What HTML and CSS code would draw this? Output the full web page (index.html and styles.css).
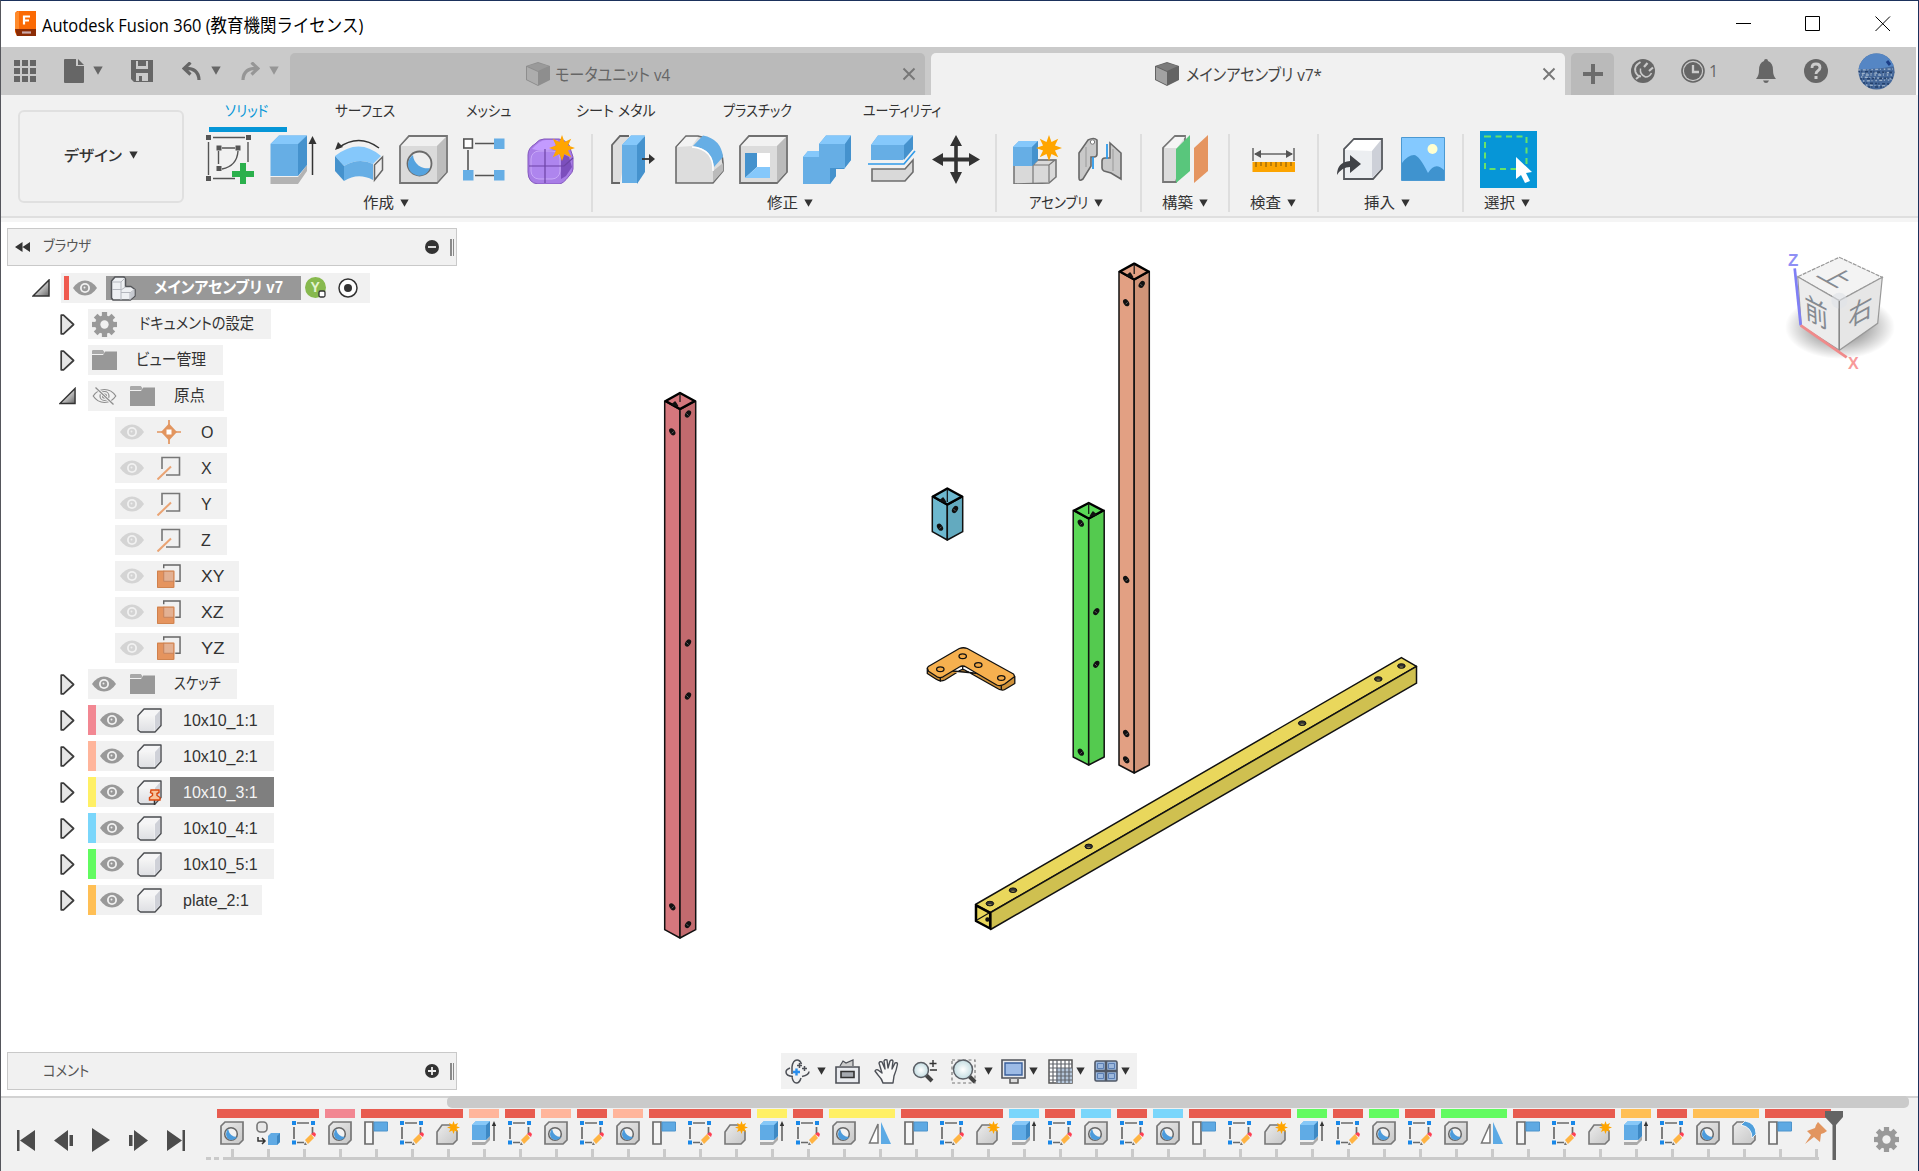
FILE: index.html
```html
<!DOCTYPE html>
<html lang="ja">
<head>
<meta charset="utf-8">
<title>Autodesk Fusion 360 (教育機関ライセンス)</title>
<link rel="stylesheet" href="styles.css">
</head>
<body>
<svg class="defs" width="0" height="0">
  <defs>
    <linearGradient id="gGray" x1="0" y1="0" x2="1" y2="1"><stop offset="0" stop-color="#ececec"/><stop offset="1" stop-color="#c6c6c6"/></linearGradient>
    <linearGradient id="gTri" x1="0" y1="0" x2="1" y2="1"><stop offset=".3" stop-color="#eee"/><stop offset="1" stop-color="#666"/></linearGradient>
    <linearGradient id="gFace" x1="0" y1="0" x2="0" y2="1"><stop offset="0" stop-color="#f4f4f4"/><stop offset="1" stop-color="#dfe0e4"/></linearGradient>
    <radialGradient id="gShadow"><stop offset="0.45" stop-color="#000" stop-opacity=".34"/><stop offset="1" stop-color="#000" stop-opacity="0"/></radialGradient>
    <radialGradient id="gLens"><stop offset="0" stop-color="#fff"/><stop offset="1" stop-color="#c4dde2"/></radialGradient>
  </defs>
  <symbol id="down" viewBox="0 0 10 9"><path d="M.3.5h9.4L5 8.700z" fill="currentColor"/></symbol>
  <symbol id="star" viewBox="-12 -12 24 24"><path d="M0-12 2.300-5.500 8.500-8.500 5.500-2.300 12 0 5.500 2.300 8.500 8.500 2.300 5.500 0 12-2.300 5.500-8.500 8.500-5.500 2.300-12 0-5.500-2.300-8.500-8.500-2.300-5.500z" fill="#ffa500"/></symbol>
  <symbol id="x" viewBox="0 0 14 14"><path d="M1.500 1.500l11 11M12.500 1.500l-11 11" stroke="#777" stroke-width="1.900" fill="none"/></symbol>
  <symbol id="tabcube" viewBox="0 0 24 24"><path d="M12 0 24 4v14l-12 6L0 18V4z" fill="#636363"/><path d="M1 5l11 5v13L1 17.500z" fill="#a2a2a2"/><path d="M1 4 12 1l11 3-11 5z" fill="#7b7b7b"/></symbol>
  <symbol id="gear" viewBox="-12 -12 24 24"><g fill="#999"><rect x="-2.500" y="-12" width="5" height="24"/><rect x="-2.500" y="-12" width="5" height="24" transform="rotate(45)"/><rect x="-2.500" y="-12" width="5" height="24" transform="rotate(90)"/><rect x="-2.500" y="-12" width="5" height="24" transform="rotate(135)"/><circle r="9"/></g><circle r="4" fill="#f1f1f1"/></symbol>
  <symbol id="folder" viewBox="0 0 25 20"><path d="M0 1.200Q0 0 1.200 0h9.600l1.700 2.300-1 1.700H0z" fill="#a9a9a9"/><path d="M0 5h11l2.300-3.500H25V20H0z" fill="#989898"/></symbol>
  <symbol id="eye" viewBox="0 0 24 16"><path d="M0 8Q5 .5 12 .5T24 8q-5 7.500-12 7.500T0 8z" fill="currentColor"/><circle cx="12" cy="8" r="5" fill="#f1f1f1"/><circle cx="12" cy="8" r="3.200" fill="currentColor"/><circle cx="11.500" cy="7.500" r="1" fill="#eee"/></symbol>
  <symbol id="eyeoff" viewBox="0 0 24 18"><g fill="none" stroke="#8d8d8d" stroke-width="1.200"><path d="M.7 9Q5 2.500 12 2.500T23.300 9Q19 15.500 12 15.500T.7 9z"/><circle cx="12" cy="9" r="4.500"/><circle cx="12" cy="9" r="2"/><path d="M3 .5l18 17" stroke="#f1f1f1" stroke-width="3"/><path d="M3 .5l18 17"/></g></symbol>
  <symbol id="shut" viewBox="0 0 15 21"><path d="M1.200 1.200h2.300L13.600 10.500 3.500 19.800H1.200z" fill="#e6e6e6" stroke="#3c3c3c" stroke-width="1.700" stroke-linejoin="round"/></symbol>
  <symbol id="open" viewBox="0 0 18 18"><path d="M17 1v16H1z" fill="url(#gTri)" stroke="#333" stroke-width="1.500"/></symbol>
  <symbol id="comp" viewBox="0 0 25 25"><path d="M1 7.500 7 1h17v16.500L18 24H3.500L1 22z" fill="#f5f5f6" stroke="#4a4c50" stroke-width="1.400" stroke-linejoin="round"/><path d="M2 8h15.500v15H4l-2-1.500z" fill="url(#gFace)"/><path d="M18 8l5-5.500v14.700L18 22.500z" fill="#cfd1d8"/></symbol>
  <symbol id="pinned" viewBox="0 0 25 25"><use href="#comp"/><path d="M17.500 20v5" stroke="#333" stroke-width="1.500"/><path d="M14 10h8v2.500l-2 1v2l3 2V20H12.500v-2.500l3-2v-2l-2-1z" fill="#f8c49c" stroke="#d9480f" stroke-width="1.400"/></symbol>
  <symbol id="asm" viewBox="0 0 26 25"><path d="M1.500 5 5 1h9l1.500 2v7.500H21l4 3V20l-4.500 4H3l-1.500-2z" fill="#eef0f3" stroke="#54565a" stroke-width="1.500" stroke-linejoin="round"/><path d="M2 13.500h9M11 24V6M11 6l4-4M11 14l4.500-3M20 24v-7l4.500-3.500M11 16.500h9M2 6h9" stroke="#b4b7be" stroke-width="1" fill="none"/><path d="M20.500 17l4-3v5.800l-4 3.500z" fill="#c6c9d0"/></symbol>
  <symbol id="point" viewBox="0 0 24 24"><path d="M12 0v24M0 12h24" stroke="#e2955f" stroke-width="1.700"/><path d="M12 3.500l8 8.500-8 8.500L4 12z" fill="#e2955f"/><rect x="9.500" y="9.500" width="5" height="5" fill="#fff"/></symbol>
  <symbol id="axis" viewBox="0 0 24 24"><path d="M5 13V1.500h17.500V19H9" fill="none" stroke="#777" stroke-width="1.600"/><path d="M.5 23.500 14 10.500" stroke="#eaa474" stroke-width="2"/></symbol>
  <symbol id="plane" viewBox="0 0 25 25"><rect x="0" y="7" width="18" height="17.500" fill="#e5945e"/><path d="M7 7h11v11H7z" fill="#e3b193"/><path d="M7 7v11h11" stroke="#c4835d" fill="none"/><path d="M.5 7.500h17v17H.5z" stroke="#cf7f4b" fill="none"/><path d="M7 4.500V1h17v17h-5" fill="none" stroke="#666" stroke-width="1.500"/></symbol>

  <symbol id="sketch" viewBox="0 0 49 49"><g fill="none" stroke="#555" stroke-width="1.400"><path d="M7 2.500h32M2.500 7v33M42 7v20M7 43.500h22M16 13h13M12.500 16v13M32 16q-1 15-16 18"/></g><g fill="#555"><path d="M0 0h5v5H0zM40 0h5v5h-5zM0 41h5v5H0zM10.500 10.500h5v5h-5zM29.500 10.500h5v5h-5zM10.500 31h5v5h-5z"/></g><path d="M34 28h6v8h8v6h-8v7h-6v-7h-8v-6h8z" fill="#2bb04c"/></symbol>
  <symbol id="extrude" viewBox="0 0 49 49"><path d="M.5 42H28l9-12v6l-9 13H.5z" fill="#b3b3b3"/><path d="M.5 9 9 .5h28L28 9v32H.5z" fill="#66aee5"/><path d="M.5 9 9 .5h28L28 9z" fill="#85c8fb"/><path d="M28 9 37 .5V30L28 41z" fill="#4592cd"/><path d="M42.500 6v34" stroke="#333" stroke-width="1.500"/><path d="M42.500 1l4 8h-8z" fill="#333"/></symbol>
  <symbol id="revolve" viewBox="0 0 49 49"><path d="M0 19Q24 0 46 19l-8 8Q24 20 9 29z" fill="#85c8fb"/><path d="M0 19l9 10v15L0 34z" fill="#4592cd"/><path d="M9 29Q24 20 38 27v16q-15-8-29 1z" fill="#66aee5"/><path d="M39.500 28l8-8v13l-8 10z" fill="#eee" stroke="#666" stroke-width="1.500"/><path d="M3 11Q24-4 44 11" fill="none" stroke="#333" stroke-width="1.500"/><path d="M0 13l3-8 5 5z" fill="#333"/></symbol>
  <symbol id="hole" viewBox="0 0 49 49"><path d="M1 11 10 1h38v36L38 48H1z" fill="#dadada" stroke="#757575" stroke-width="1.800"/><path d="M2 11 10.500 2H47l-9 9z" fill="#f0f0f0"/><path d="M38 11l9-9v35l-9 10z" fill="#bdbdbd"/><circle cx="20.500" cy="28.500" r="12" fill="#eee" stroke="#6a6a6a" stroke-width="1.800"/><path d="M14 20a14 14 0 0 0 17 13 11.300 11.300 0 1 1-17-13z" fill="#55a3df"/></symbol>
  <symbol id="pattern" viewBox="0 0 49 49"><g stroke="#555" stroke-width="1.600" fill="none"><path d="M12 8.500h19M5 15v20M12 40.500h19"/><rect x=".8" y="4" width="8.600" height="9" fill="#fff"/></g><path d="M31 3.500h10.500V14H31zM0 35h10.500v10.500H0zM31 35h10.500v10.500H31z" fill="#66aee5"/></symbol>
  <symbol id="form" viewBox="0 0 49 49"><path d="M1 20Q1 13 8 9q4-5 9-5h15q5 0 10 6l4 12v12q0 3-4 7-6 8-10 8H11Q1 48 1 37z" fill="#a87de6" stroke="#8357bd"/><path d="M5 14q8-9 14-9h12l-5 9q-10 3-21 0z" fill="#c39bff"/><path d="M34 18l8 4 3 10-6 9-5 3z" fill="#7c4fbd"/><rect x="4" y="16" width="29" height="28" rx="8" fill="#ae85ee" stroke="#c8a8f8"/><path d="M2 31h35M18 14v34M37 31l9-8" stroke="#6c43a5" stroke-width="1.200" fill="none"/><use href="#star" x="22" y="0" width="26" height="26"/></symbol>
  <symbol id="press" viewBox="0 0 49 49"><path d="M9 48H1V10L9 1h9" fill="#ddd" stroke="#666" stroke-width="1.800"/><path d="M11 10 20 .5h14L27 10v38H11z" fill="#66aee5"/><path d="M11 10 20 .5h14L27 10z" fill="#85c8fb"/><path d="M26 10l8-9v36l-8 12z" fill="#4592cd"/><path d="M31 24h10" stroke="#333" stroke-width="1.800"/><path d="M38 19l6 5-6 5z" fill="#333"/></symbol>
  <symbol id="fillet" viewBox="0 0 49 49"><path d="M1 12 11 1h12Q47 6 48 28v8L38 48H1z" fill="#ddd" stroke="#6b6b6b" stroke-width="1.600"/><path d="M2 12 11 2h12l-6 9z" fill="#f3f3f3"/><path d="M18 11 28 .5Q46 4 48 22l-9 10Q37 14 18 11z" fill="#66aee5"/><path d="M38 36l10-8v8L38 47z" fill="#bbb"/><path d="M17 12q22 2 21 24" stroke="#fff" stroke-width="1.500" fill="none"/></symbol>
  <symbol id="shell" viewBox="0 0 49 49"><path d="M1 11 10 1h38v36L38 48H1z" fill="#dcdcdc" stroke="#707070" stroke-width="1.800"/><path d="M2 11 10.500 2H47l-9 9z" fill="#f2f2f2"/><path d="M38 11l9-9v35l-9 10z" fill="#bbb"/><path d="M6 18h25v25H6z" fill="#fff"/><path d="M6 18h12v14L6 43z" fill="#4592cd"/><path d="M6 43l12-11h13v11z" fill="#85c8fb"/></symbol>
  <symbol id="combine" viewBox="0 0 49 49"><path d="M0 22l5-6h11V9l7-8.500h25V25l-7 9h-8v7l-6 8H0z" fill="#66aee5"/><path d="M16 9l7-8.500h25L42 9zM0 22l5-6h11v6z" fill="#85c8fb"/><path d="M42 9l6-8.500V25l-7 9h-8v7l-6 8V33h15z" fill="#4592cd"/></symbol>
  <symbol id="split" viewBox="0 0 49 49"><path d="M3 10 10 .5h35V14L35 25H3z" fill="#66aee5"/><path d="M3 10 10 .5h35L37 10z" fill="#85c8fb"/><path d="M36 10l9-9v13L36 25z" fill="#4592cd"/><path d="M0 29h36L47 16" fill="none" stroke="#319be9" stroke-width="1.700"/><path d="M4 34h33l8-9v12l-8 9H4z" fill="#d9d9d9" stroke="#6d6d6d" stroke-width="1.600"/></symbol>
  <symbol id="move" viewBox="0 0 49 49"><path d="M24 0l6 11h-4.200v11.500H37V18l11 6.500L37 31v-4.500H25.800V37H30l-6 12-6-12h4.200V26.500H11V31L0 24.500 11 18v4.500h11.200V11H18z" fill="#333"/></symbol>
  <symbol id="newcomp" viewBox="0 0 49 49"><path d="M1 49V30h18l5-5h19v17l-7 6z" fill="#d9d9d9" stroke="#777" stroke-width="1.600"/><path d="M20 30v18M20 30l5-5h17l-6 5H20M36 30v17" stroke="#777" fill="none" stroke-width="1.200"/><path d="M0 12l6-6h19v19l-6 6H0z" fill="#66aee5"/><path d="M0 12l6-6h19l-6 6z" fill="#85c8fb"/><path d="M19 12l6-6v19l-6 6z" fill="#4592cd"/><use href="#star" x="23" y="0" width="26" height="26"/></symbol>
  <symbol id="joint" viewBox="0 0 49 49"><g fill="#c9c9c9" stroke="#686868" stroke-width="1.600"><path d="M2 18 11 5q6-3 9 0v14q0 3-3 3h-3v9L6 44q-4 3-4-1z"/><path d="M33 8l11 10v26L34 38l-7-2q-2-1-2-3v-7q0-3 3-3h5z"/></g><path d="M9 12v20M36 14v22" stroke="#a9a9a9" stroke-width="1.500"/><path d="M16 22v12M30 9v15" stroke="#2f9bea" stroke-width="1.800"/><circle cx="15.500" cy="7" r="2.200" fill="#fff" stroke="#777"/></symbol>
  <symbol id="construct" viewBox="0 0 49 49"><path d="M1 13 13 1h10v12l-9 34H1z" fill="#dcdcdc" stroke="#777" stroke-width="1.800"/><path d="M2 13 13 2h10l-8 11z" fill="#f5f5f5"/><path d="M14 14 28 0v36L14 48z" fill="#59c67c"/><path d="M32 13 46 0v36L32 48z" fill="#e59560"/></symbol>
  <symbol id="measure" viewBox="0 0 49 49"><path d="M4 13v13M45 13v13M6 19h37" stroke="#666" stroke-width="1.500"/><path d="M5 19l7-4v8zM44 19l-7-4v8z" fill="#555"/><path d="M3.500 27H46v10H3.500z" fill="#fca400"/><path d="M7 27v5M12 27v4M17 27v5M22 27v4M27 27v5M32 27v4M37 27v5M42 27v4" stroke="#78520d"/></symbol>
  <symbol id="insert" viewBox="0 0 49 49"><path d="M7 43V14L17 4h28v30L36 44H7z" fill="#eceef1" stroke="#55585d" stroke-width="1.800"/><path d="M8 15 17 5h27l-9 11z" fill="#fff"/><path d="M35 16l9-11v29l-9 9z" fill="#cdd0d8"/><path d="M0 40q0-13 13-14v-6l11 9-11 9v-6q-8 0-13 8z" fill="#404247"/></symbol>
  <symbol id="image" viewBox="0 0 49 49"><path d="M.5 2.500h43v43H.5z" fill="#84c9ff" stroke="#4b99d2"/><path d="M1 28Q7 20 13 20q5 0 14 18 7-12 16-3v10H1z" fill="#3f93cf"/><circle cx="31.500" cy="14" r="5" fill="#ffffd0"/></symbol>
  <symbol id="select" viewBox="0 0 57 57"><path d="M0 0h57v57H0z" fill="#0696d7"/><path d="M5 5.500h41.500V38H5z" fill="none" stroke="#68e269" stroke-width="2" stroke-dasharray="6 4.500"/><path d="M36 26v22l5-4 4 8 5-2-4-8 6-1z" fill="#fff"/></symbol>

  <symbol id="t-hole" viewBox="0 0 24 24"><path d="M1 5 5 1h18v18l-4 4H1z" fill="url(#gGray)" stroke="#777" stroke-width="1.700"/><circle cx="11" cy="13" r="6.300" fill="#f2f2f2" stroke="#666" stroke-width="1.500"/><path d="M8 8q2 8 9 8-2 3-6 3-5-1-5-6 0-3 2-5z" fill="#4b9bdc"/></symbol>
  <symbol id="t-copy" viewBox="0 0 24 24"><rect x="1" y="1" width="10" height="10" rx="3.500" fill="#e8e8e8" stroke="#777" stroke-width="1.600"/><path d="M2 16v4h7M6 17l3 3-3 3" fill="none" stroke="#333" stroke-width="1.500"/><path d="M12 15l3-3h9v9l-3 3h-9z" fill="#60aae4"/><path d="M21 15l3-3v9l-3 3z" fill="#3d87c2"/></symbol>
  <symbol id="t-sketch" viewBox="0 0 24 24"><path d="M5 2h12M2 6v12M20.500 6v7M5 21.500h7" stroke="#6a6a6a" stroke-width="1.700"/><path d="M0 0h4v4H0zM19 0h4v4h-4zM0 19.500h4v4H0z" fill="#1988e8"/><path d="M13 19l6-6 3 4-6 6z" fill="#ffb443"/><path d="M19 13l3-2 2 2-1 3z" fill="#ff4053"/><path d="M13 21l2 3h-3z" fill="#777"/></symbol>
  <symbol id="t-plane" viewBox="0 0 24 24"><path d="M1 1h8v22H1z" fill="#f6f6f6" stroke="#6b6b6b" stroke-width="1.700"/><path d="M10 1h13.500v9H10z" fill="#5ea9e3" stroke="#4d94cc"/></symbol>
  <symbol id="t-comp" viewBox="0 0 24 24"><path d="M1 11 6 4h8l7 6v9l-4 4H1z" fill="url(#gGray)" stroke="#777" stroke-width="1.600"/><use href="#star" x="11" y="0" width="13" height="13"/></symbol>
  <symbol id="t-ext" viewBox="0 0 24 24"><path d="M0 21h13l5-6v4l-5 5H0z" fill="#aaa"/><path d="M0 4 4 0h14v15l-4 4H0z" fill="#60abe5"/><path d="M14 4l4-4v15l-4 4z" fill="#3e89c4"/><path d="M0 4 4 0h14l-4 4z" fill="#87c8f8"/><path d="M22 4v16" stroke="#444" stroke-width="1.300"/><path d="M22 0l2.200 5h-4.400z" fill="#333"/></symbol>
  <symbol id="t-mirror" viewBox="0 0 24 24"><path d="M10 3v19H1.500z" fill="#fff" stroke="#777" stroke-width="1.500"/><path d="M13 1l10 22H13z" fill="#5caae5"/></symbol>
  <symbol id="t-fillet" viewBox="0 0 24 24"><path d="M1 5 5 1h7Q23 4 23 14v5l-4 4H1z" fill="url(#gGray)" stroke="#777" stroke-width="1.600"/><path d="M9 4 13 0Q24 2 24 13l-4 4Q20 6 9 4z" fill="#4f9fdc" stroke="#fff" stroke-width=".8"/></symbol>
  <symbol id="t-pin" viewBox="0 0 24 24"><path d="M14 1l9 9-3 2-3 1-1 8-6-5-9 7 6-9-4-4 8-3 1-3z" fill="#e2955f"/></symbol>
</svg>

<div class="window">
  <header class="titlebar">
    <svg class="logo" width="22" height="25" viewBox="0 0 22 25"><path d="M3 0h19v25H3L1 21V2z" fill="#fb6a04"/><path d="M1 18h21v7H3z" fill="#8c2c05"/><path d="M1 2l4-2v18H1z" fill="#ff8b2c"/><path d="M10 13.500V5.500h6M10 9.500h5" stroke="#fff" stroke-width="2.200" fill="none"/><path d="M8 21.500h9" stroke="#caa" stroke-width="2.200"/></svg>
    <span class="title" data-w="321">Autodesk Fusion 360 (教育機関ライセンス)</span>
    <div class="winctl">
      <svg width="16" height="16" viewBox="0 0 16 16"><path d="M0 7.500h15"/></svg>
      <svg width="16" height="16" viewBox="0 0 16 16"><path d="M.5.5h14v14H.5z"/></svg>
      <svg width="16" height="16" viewBox="0 0 16 16"><path d="M.5.5l14.500 14.500M15 .5.5 15"/></svg>
    </div>
  </header>

  <div class="tabbar">
    <div class="qat">
      <svg width="22" height="22" viewBox="0 0 22 22"><path d="M0 0h6v6H0zM8 0h6v6H8zM16 0h6v6h-6zM0 8h6v6H0zM8 8h6v6H8zM16 8h6v6h-6zM0 16h6v6H0zM8 16h6v6H8zM16 16h6v6h-6z"/></svg>
      <svg class="m28" width="20" height="24" viewBox="0 0 20 24"><path d="M0 1q0-1 1-1h11v7h8v16q0 1-1 1H1q-1 0-1-1z"/><path d="M14 0l6 6h-6z"/></svg>
      <svg class="m9" width="10" height="9"><use href="#down"/></svg>
      <svg class="m28" width="22" height="22" viewBox="0 0 22 22"><path fill-rule="evenodd" d="M0 0h22v22H3l-3-3zM5 1v8h12V1h-2v5H7V1zM5 13v8h3v-5h3v5h6v-8z"/></svg>
      <svg class="m29 back" width="20" height="18" viewBox="0 0 20 18"><path d="M8.500.5 2 6.500l6.500 6M2.500 6.500Q16.500 5.500 17 18"/></svg>
      <svg class="m9" width="10" height="9"><use href="#down"/></svg>
      <svg class="m19 dim back" width="20" height="18" viewBox="0 0 20 18"><path d="M11.500.5 18 6.500l-6.500 6M17.500 6.500Q3.500 5.500 3 18"/></svg>
      <svg class="m9 dim" width="10" height="9"><use href="#down"/></svg>
    </div>
    <div class="tab idle">
      <svg class="cube" width="24" height="24"><use href="#tabcube"/></svg><span data-w="115">モータユニット v4</span>
      <svg class="close" width="14" height="14"><use href="#x"/></svg>
    </div>
    <div class="tab active">
      <svg class="cube" width="24" height="24"><use href="#tabcube"/></svg><span data-w="136">メインアセンブリ v7*</span>
      <svg class="close" width="14" height="14"><use href="#x"/></svg>
    </div>
    <div class="tab plus"><svg width="20" height="20" viewBox="0 0 20 20"><path d="M10 0v20M0 10h20" stroke="#6c6c6c" stroke-width="4"/></svg></div>
    <div class="status">
      <svg width="24" height="24" viewBox="0 0 24 24"><circle cx="12" cy="12" r="12" fill="#666"/><path d="M9.500 3Q2.500 7 4.500 13q1.500 4 5.500 4.500M5 20l5-4" stroke="#cacaca" stroke-width="2" fill="none"/><path d="M9 11l5-4 6 6-3 4q-5 2-8-1z" fill="#666"/><path d="M13 8l3.500-4M18 12l4-3.500" stroke="#cacaca" stroke-width="2.200"/><path d="M9.500 9.500q-1 6 5 8.500 4 0 6-4" stroke="#cacaca" stroke-width="1.500" fill="none"/></svg>
      <svg class="s-clock" width="24" height="24" viewBox="0 0 24 24"><circle cx="12" cy="12" r="11" fill="none" stroke="#666" stroke-width="1.600"/><circle cx="12" cy="12" r="9" fill="#666"/><path d="M12 6v7h6" stroke="#ccc" stroke-width="2.300" fill="none"/></svg>
      <b class="count">1</b>
      <svg class="s-bell" width="20" height="24" viewBox="0 0 20 24"><path d="M10 0q2 0 2 2 5 2 5 9 0 6 3 9H0q3-3 3-9 0-7 5-9 0-2 2-2zM7 21.500h6q-1 2.500-3 2.500t-3-2.500z" fill="#666"/></svg>
      <svg class="s-help" width="24" height="24" viewBox="0 0 24 24"><circle cx="12" cy="12" r="12" fill="#666"/><path d="M8 9q0-4 4-4t4 3.500q0 2-2 3.200T12 15" stroke="#ccc" stroke-width="2.800" fill="none"/><path d="M10.500 17h3v3h-3z" fill="#ccc"/></svg>
      <svg class="s-user" width="37" height="37" viewBox="0 0 37 37"><clipPath id="av"><circle cx="18.500" cy="18.500" r="18"/></clipPath><g clip-path="url(#av)"><path d="M0 0h37v37H0z" fill="#45689a"/><path d="M0 0h37v13q-18 4-37 3z" fill="#5586c4"/><path d="M1 17l34-1M0 20.500l37-1M3 24l32 2M5 28l28-1M8 32l22 1M4 22l30 0" stroke="#9fb3ca" stroke-width="1.300" stroke-dasharray="1.500 2.300 3 1.700 1 2.900"/><path d="M0 18.500l37 1M2 26l33-1M5 30l28 1M10 34h20" stroke="#24406b" stroke-width="1.600" stroke-dasharray="2 1.300 1 2.700 3 2.100"/><path d="M29 8l3 4" stroke="#1c3e86" stroke-width="3"/></g></svg>
    </div>
  </div>

  <div class="ribbon">
    <div class="workspace"><b data-w="58">デザイン</b><svg width="9" height="8"><use href="#down"/></svg></div>
    <div class="tools">
      <nav class="rtabs">
        <span class="on"><i data-w="43">ソリッド</i></span><span><i data-w="60">サーフェス</i></span><span><i data-w="45">メッシュ</i></span><span><i data-w="80">シート メタル</i></span><span><i data-w="69">プラスチック</i></span><span><i data-w="78">ユーティリティ</i></span>
      </nav>
      <div class="groups">
        <section class="g1"><div class="icons"><svg><use href="#sketch"/></svg><svg><use href="#extrude"/></svg><svg class="rev"><use href="#revolve"/></svg><svg><use href="#hole"/></svg><svg><use href="#pattern"/></svg><svg><use href="#form"/></svg></div><div class="label"><span data-w="31">作成</span><svg width="9" height="8"><use href="#down"/></svg></div></section>
        <section class="g2"><div class="icons"><svg><use href="#press"/></svg><svg><use href="#fillet"/></svg><svg><use href="#shell"/></svg><svg><use href="#combine"/></svg><svg><use href="#split"/></svg><svg><use href="#move"/></svg></div><div class="label"><span data-w="31">修正</span><svg width="9" height="8"><use href="#down"/></svg></div></section>
        <section class="g3"><div class="icons"><svg><use href="#newcomp"/></svg><svg><use href="#joint"/></svg></div><div class="label"><span data-w="59">アセンブリ</span><svg width="9" height="8"><use href="#down"/></svg></div></section>
        <section class="g4"><div class="icons"><svg><use href="#construct"/></svg></div><div class="label"><span data-w="31">構築</span><svg width="9" height="8"><use href="#down"/></svg></div></section>
        <section class="g5"><div class="icons"><svg><use href="#measure"/></svg></div><div class="label"><span data-w="31">検査</span><svg width="9" height="8"><use href="#down"/></svg></div></section>
        <section class="g6"><div class="icons"><svg><use href="#insert"/></svg><svg><use href="#image"/></svg></div><div class="label"><span data-w="31">挿入</span><svg width="9" height="8"><use href="#down"/></svg></div></section>
        <section class="g7"><div class="icons"><svg class="big"><use href="#select"/></svg></div><div class="label"><span data-w="31">選択</span><svg width="9" height="8"><use href="#down"/></svg></div></section>
      </div>
    </div>
  </div>

  <main class="viewport">
    <svg class="scene" width="1918" height="874" viewBox="0 222 1918 874">
      <defs>
        <g id="hl"><ellipse rx="2.600" ry="3.900" transform="rotate(-35)" fill="#111"/><path d="M-.5 1.500 1.500-.5" stroke="#777" stroke-width=".8"/></g>
        <g id="hr"><ellipse rx="2.600" ry="3.900" transform="rotate(35)" fill="#111"/><path d="M.5 1.500-1.500-.5" stroke="#777" stroke-width=".8"/></g>
        <g id="ht"><ellipse rx="3.800" ry="2.300" fill="#333" stroke="#111"/><path d="M-1.500 1h3" stroke="#998f45" stroke-width="1"/></g>
      </defs>
      <g stroke="#111" stroke-width="1.500" stroke-linejoin="round">
        <g><path d="M664.700 401 680 409.500V938l-15.300-8.300z" fill="#d5777d"/><path d="M680 409.500l15.700-8.500v528.700L680 938z" fill="#c26a6e"/><path d="M680 393l14.700 8-14.700 8-14.300-8z" fill="#d5777d" stroke="#000" stroke-width="2.500"/><path d="M680 393v9" fill="none" stroke-width="1.200"/><path d="M672 404.500l3-2.500 2.500 4z" fill="#111"/></g>
        <g><path d="M932.300 496.500l15 8.500v35l-15-8.300z" fill="#6db8cf"/><path d="M947.300 505l15.400-8.500v35.200L947.300 540z" fill="#63aabf"/><path d="M947.300 488.500l14.700 8-14.700 8-14.300-8z" fill="#6db8cf" stroke="#000" stroke-width="2.500"/><path d="M947.300 489v13" fill="none" stroke-width="1.200"/><path d="M940 500.500l3-2.500 2.500 4z" fill="#111"/></g>
        <g><path d="M1119 271.400l15.200 8.500V773l-15.200-8z" fill="#e2a083"/><path d="M1134.200 279.900l15.100-8.500V765l-15.100 8z" fill="#d09478"/><path d="M1134.200 263.700l14.300 7.800-14.300 8-14.300-8z" fill="#e2a083" stroke="#000" stroke-width="2.500"/><path d="M1134.200 264v10" fill="none" stroke-width="1.200"/><path d="M1127 275.500l3-2.500 2.500 4z" fill="#111"/></g>
        <g><path d="M1073.200 510.300l15.500 8.500V765l-15.500-8z" fill="#5bd957"/><path d="M1088.700 518.800l15.500-8.500V757l-15.500 8z" fill="#54ca4f"/><path d="M1088.700 503l14.500 7.500-14.500 8-14.500-8z" fill="#5bd957" stroke="#000" stroke-width="2.500"/><path d="M1088.700 503v11" fill="none" stroke-width="1.200"/><path d="M1096 514.500l-3-2.500-2.500 4z" fill="#111"/></g>
        <g><path d="M975.400 904.500l426-246.900 15.100 8.800L990.600 912.500z" fill="#e9d75c"/><path d="M990.600 912.500l425.900-246.100v16.800L990.600 929.500z" fill="#cfc050"/><path d="M976 905.500l14.200 7.500v15.500L976 921z" fill="#e9d75c" stroke="#000" stroke-width="2.500"/><path d="M977 920l12-7" fill="none" stroke-width="1.200"/><circle cx="987.500" cy="919.500" r="1.500" fill="#111"/></g>
        <g stroke-width="1.300"><path d="M927.300 668.500v5l8.500 5.500q4.500 3 9 1l16-10q2-1 4 0l31 17.500q6 4 9 2l10-6v-6.500z" fill="#cf9139"/><path d="M927.300 668l1-1.500 31-18q4-1.500 8 0L1013.500 674l1.200 2.600-10 7.400q-4 2.500-8 1L966 667q-3.300-2-6.600 0l-16.400 9.800q-3 1.500-6 0l-8.500-5.500z" fill="#f6b04f"/><path d="M940.300 677.800v4M1001.300 686v4M962.700 666v4" fill="none"/><g fill="#f1a744"><ellipse cx="940.300" cy="669.300" rx="3.700" ry="2.400"/><ellipse cx="962.700" cy="656.300" rx="3.700" ry="2.400"/><ellipse cx="978.300" cy="665" rx="3.700" ry="2.400"/><ellipse cx="1001.300" cy="678" rx="3.700" ry="2.400"/></g></g>
      </g>
      <use href="#hr" x="688" y="414"/><use href="#hl" x="672.300" y="431.800"/><use href="#hr" x="688" y="643"/><use href="#hr" x="688" y="696"/><use href="#hl" x="672.300" y="906.800"/><use href="#hr" x="688" y="924.600"/>
      <use href="#hr" x="955" y="509.500"/><use href="#hl" x="940" y="527.200"/>
      <use href="#hr" x="1141.700" y="284.400"/><use href="#hl" x="1126.200" y="302.700"/><use href="#hl" x="1126.200" y="579.500"/><use href="#hl" x="1126.200" y="733.500"/><use href="#hl" x="1126.200" y="759.800"/>
      <use href="#hl" x="1080.800" y="523.200"/><use href="#hr" x="1096.300" y="611.600"/><use href="#hr" x="1096.300" y="664.300"/><use href="#hl" x="1080.800" y="752.200"/>
      <use href="#ht" x="989.900" y="903.600"/><use href="#ht" x="1013" y="890.200"/><use href="#ht" x="1088.700" y="846.400"/><use href="#ht" x="1302.200" y="723.200"/><use href="#ht" x="1378.300" y="679"/><use href="#ht" x="1401.400" y="666"/>
      <g class="viewcube">
        <ellipse cx="1840" cy="327" rx="55" ry="32" fill="url(#gShadow)"/>
        <g stroke="#999" stroke-width="1.200"><path d="M1839.300 257.300l43 20-43 23.400-41.600-24z" fill="#f3f3f3" stroke-dasharray="4 1"/><path d="M1797.700 276.700l41.600 24v49.600l-38-24.600z" fill="#ececec"/><path d="M1882.300 277.300l-43 23.400v49.600l38.400-27z" fill="#e6e6e6"/></g>
        <circle cx="1839.300" cy="300.700" r="8" fill="#dfe3e8" opacity=".6"/>
        <path d="M1839.300 301v49" stroke="#888" stroke-width="1.300"/>
        <path d="M1794.700 268.300l6 57" stroke="#7f7ff5" stroke-width="2.700"/><path d="M1800.700 325.300l46 32" stroke="#f08a8a" stroke-width="2.700"/>
        <text transform="matrix(.9 .5 -.95 .5 1837 273)" font-size="26" x="-9" y="14">上</text>
        <text transform="matrix(.87 .46 .06 1.100 1807 320)" font-size="27" x="-2" y="-2">前</text>
        <text transform="matrix(.9 -.5 -.03 1 1848 328)" font-size="27">右</text>
        <text class="az" x="1788" y="265.500">Z</text><text class="ax" x="1848" y="369">X</text>
      </g>
    </svg>
    <div class="overlay">
      <div class="panelhead browserhead">
        <svg width="15" height="10" viewBox="0 0 15 10"><path d="M7.500 0v10L0 5zM15 0v10L7.500 5z" fill="#333"/></svg>
        <span data-w="48">ブラウザ</span>
        <svg class="knob" width="14" height="14" viewBox="0 0 14 14"><circle cx="7" cy="7" r="7" fill="#333"/><path d="M3 7h8" stroke="#eee" stroke-width="1.800"/></svg><i class="grip"></i>
      </div>
      <div class="tree">
        <div class="row root"><svg class="tg" width="18" height="18"><use href="#open"/></svg><div class="cell"><i class="bar"></i><svg class="eye" width="24" height="16"><use href="#eye"/></svg><div class="sel"><svg width="26" height="25"><use href="#asm"/></svg><b data-w="129">メインアセンブリ v7</b></div><svg class="badge" width="22" height="22" viewBox="0 0 22 22"><circle cx="10.500" cy="10.500" r="10.500" fill="#87b94e"/><text x="5.500" y="15" fill="#e4f4d0" font-size="14">Y</text><rect x="14" y="14" width="6" height="6" rx="1.500" fill="#fff" stroke="#333" stroke-width="1.300"/></svg><svg width="20" height="20" viewBox="0 0 20 20"><circle cx="10" cy="10" r="9" fill="#fff" stroke="#333" stroke-width="1.500"/><circle cx="10" cy="10" r="4" fill="#333"/></svg></div></div>
        <div class="row l1"><svg class="tg" width="15" height="21"><use href="#shut"/></svg><div class="cell w183"><svg width="25" height="25"><use href="#gear"/></svg><span class="n22" data-w="115">ドキュメントの設定</span></div></div>
        <div class="row l1"><svg class="tg" width="15" height="21"><use href="#shut"/></svg><div class="cell w135"><svg width="25" height="20"><use href="#folder"/></svg><span class="n19" data-w="70">ビュー管理</span></div></div>
        <div class="row l1"><svg class="tg" width="17" height="18"><use href="#open"/></svg><div class="cell w136"><svg width="25" height="18"><use href="#eyeoff"/></svg><svg class="f2" width="25" height="20"><use href="#folder"/></svg><span class="n19" data-w="31">原点</span></div></div>
        <div class="row l2"><div class="cell w112"><svg class="eye faint" width="24" height="16"><use href="#eye"/></svg><svg class="k" width="24" height="24"><use href="#point"/></svg><span>O</span></div></div>
        <div class="row l2"><div class="cell w112"><svg class="eye faint" width="24" height="16"><use href="#eye"/></svg><svg class="k" width="24" height="24"><use href="#axis"/></svg><span>X</span></div></div>
        <div class="row l2"><div class="cell w112"><svg class="eye faint" width="24" height="16"><use href="#eye"/></svg><svg class="k" width="24" height="24"><use href="#axis"/></svg><span>Y</span></div></div>
        <div class="row l2"><div class="cell w112"><svg class="eye faint" width="24" height="16"><use href="#eye"/></svg><svg class="k" width="24" height="24"><use href="#axis"/></svg><span>Z</span></div></div>
        <div class="row l2"><div class="cell w124"><svg class="eye faint" width="24" height="16"><use href="#eye"/></svg><svg class="k" width="24" height="24"><use href="#plane"/></svg><span data-w="23">XY</span></div></div>
        <div class="row l2"><div class="cell w124"><svg class="eye faint" width="24" height="16"><use href="#eye"/></svg><svg class="k" width="24" height="24"><use href="#plane"/></svg><span data-w="22">XZ</span></div></div>
        <div class="row l2"><div class="cell w124"><svg class="eye faint" width="24" height="16"><use href="#eye"/></svg><svg class="k" width="24" height="24"><use href="#plane"/></svg><span data-w="23">YZ</span></div></div>
        <div class="row l1"><svg class="tg" width="15" height="21"><use href="#shut"/></svg><div class="cell w149"><svg class="eye" width="24" height="16"><use href="#eye"/></svg><svg class="f2b" width="25" height="20"><use href="#folder"/></svg><span class="n19" data-w="47">スケッチ</span></div></div>
        <div class="row part c-pink"><svg class="tg" width="15" height="21"><use href="#shut"/></svg><div class="cell"><svg class="eye" width="24" height="16"><use href="#eye"/></svg><svg class="c" width="25" height="25"><use href="#comp"/></svg><span>10x10_1:1</span></div></div>
        <div class="row part c-peach"><svg class="tg" width="15" height="21"><use href="#shut"/></svg><div class="cell"><svg class="eye" width="24" height="16"><use href="#eye"/></svg><svg class="c" width="25" height="25"><use href="#comp"/></svg><span>10x10_2:1</span></div></div>
        <div class="row part c-yellow"><svg class="tg" width="15" height="21"><use href="#shut"/></svg><div class="cell"><svg class="eye" width="24" height="16"><use href="#eye"/></svg><svg class="c" width="25" height="25"><use href="#pinned"/></svg><span class="picked">10x10_3:1</span></div></div>
        <div class="row part c-blue"><svg class="tg" width="15" height="21"><use href="#shut"/></svg><div class="cell"><svg class="eye" width="24" height="16"><use href="#eye"/></svg><svg class="c" width="25" height="25"><use href="#comp"/></svg><span>10x10_4:1</span></div></div>
        <div class="row part c-green"><svg class="tg" width="15" height="21"><use href="#shut"/></svg><div class="cell"><svg class="eye" width="24" height="16"><use href="#eye"/></svg><svg class="c" width="25" height="25"><use href="#comp"/></svg><span>10x10_5:1</span></div></div>
        <div class="row part c-orange"><svg class="tg" width="15" height="21"><use href="#shut"/></svg><div class="cell short"><svg class="eye" width="24" height="16"><use href="#eye"/></svg><svg class="c" width="25" height="25"><use href="#comp"/></svg><span>plate_2:1</span></div></div>
      </div>
      <div class="bottom">
        <div class="panelhead comments"><span data-w="46">コメント</span><svg class="knob" width="14" height="14" viewBox="0 0 14 14"><circle cx="7" cy="7" r="7" fill="#333"/><path d="M3 7h8M7 3v8" stroke="#eee" stroke-width="1.800"/></svg><i class="grip"></i></div>
        <div class="navbar">
          <svg width="25" height="25" viewBox="0 0 25 25"><g fill="none" stroke="#4d5057" stroke-width="1.500"><path d="M7 8q1-7 5-7 3 0 4.500 4M7 18q1 6 4.500 6 3 0 4.500-5M5 9q-4 1.500-4 4 0 4 7 4.500M17 17.500q7-1.500 7-5M19.500 7v5M17 9.500h5M14.500 4v5M12 6.500h5M7 8v7"/></g><path d="M11.500 9.500v7M8 13h7" stroke="#2a8dec" stroke-width="2.400"/></svg>
          <svg class="dn" width="9" height="8"><use href="#down"/></svg>
          <svg class="n3" width="25" height="25" viewBox="0 0 25 25"><path d="M1 8h23v16H1z" fill="#e9ebef" stroke="#4d5057" stroke-width="1.600"/><path d="M5 7 8 2l3 2 7-3v6" fill="#ccc" stroke="#4d5057" stroke-width="1.200"/><path d="M6 12.500h13v6H6z" fill="#a6aab0" stroke="#333" stroke-width="1.600"/></svg>
          <svg class="n4" width="25" height="25" viewBox="0 0 25 25"><path d="M9 24q-1-4-5-8l-3-4q1-2 3-1l4 3L5 4q1-2 3-1l3 7-1-8q1-2 3-1l1 8 2-7q2-2 3 0l-1 8 3-6q2-1 2.500 1-1 6-3.500 12l-1 7z" fill="#f7f7f7" stroke="#4d5057" stroke-width="1.400" stroke-linejoin="round"/></svg>
          <svg class="n5" width="26" height="25" viewBox="0 0 26 25"><path d="M14 16l6 6" stroke="#444" stroke-width="4"/><circle cx="9" cy="11" r="7.500" fill="url(#gLens)" stroke="#5b5f66" stroke-width="1.500"/><path d="M21 1v7M17.500 4.500h7M18 11h7" stroke="#333" stroke-width="1.400"/></svg>
          <svg class="n6" width="26" height="25" viewBox="0 0 26 25"><path d="M1 1h23v23H1z" fill="none" stroke="#777" stroke-dasharray="3 2.500" stroke-width="1.200"/><path d="M18 17l6 6" stroke="#444" stroke-width="4"/><circle cx="12" cy="10.500" r="9.500" fill="url(#gLens)" stroke="#5b5f66" stroke-width="1.500"/></svg>
          <svg class="n7" width="9" height="8"><use href="#down"/></svg>
          <svg class="n8" width="25" height="25" viewBox="0 0 25 25"><path d="M9 20v4h8v-4" fill="#ddd" stroke="#555" stroke-width="1.500"/><path d="M1 1h23v18H1z" fill="#e6e8ec" stroke="#50535a" stroke-width="1.600"/><path d="M4 4h17v12H4z" fill="#9dbbe6" stroke="#385f9c" stroke-width="1.400"/></svg>
          <svg class="n9" width="9" height="8"><use href="#down"/></svg>
          <svg class="n10" width="25" height="25" viewBox="0 0 25 25"><path d="M1 1h23v23H1z" fill="#fff" stroke="#555" stroke-width="1.500"/><path d="M8 9h16v15H8z" fill="#b5c6da"/><path d="M5 1v23M9 1v23M13 1v23M17 1v23M21 1v23M1 5h23M1 9h23M1 13h23M1 17h23M1 21h23" stroke="#61656c" stroke-width="1.200"/></svg>
          <svg class="n9" width="9" height="8"><use href="#down"/></svg>
          <svg class="n10" width="24" height="24" viewBox="0 0 24 24"><rect x="1" y="2" width="22" height="20" rx="1.500" fill="#9db8dc" stroke="#505866" stroke-width="1.600"/><path d="M12 2v20M1 12h22" stroke="#505866" stroke-width="2.500"/><path d="M3.500 4.500h6v5h-6zM14.500 4.500h6v5h-6zM3.500 14.500h6v5h-6zM14.500 14.500h6v5h-6z" fill="none" stroke="#5b7fb5"/></svg>
          <svg class="n9" width="9" height="8"><use href="#down"/></svg>
        </div>
      </div>
    </div>
  </main>

  <footer class="timeline">
    <div class="player">
      <svg width="18" height="21" viewBox="0 0 18 21"><path d="M0 0h2.500v21H0zM18 0v21L3 10.500z"/></svg>
      <svg width="19" height="21" viewBox="0 0 19 21"><path d="M14 0v21L0 10.500zM15.500 5H19v11h-3.500z"/></svg>
      <svg width="18" height="24" viewBox="0 0 18 24"><path d="M0 0l18 12L0 24z"/></svg>
      <svg width="19" height="21" viewBox="0 0 19 21"><path d="M5 0v21l14-10.500zM0 5h3.500v11H0z"/></svg>
      <svg width="18" height="21" viewBox="0 0 18 21"><path d="M18 0h-2.500v21H18zM0 0v21l15-10.500z"/></svg>
    </div>
    <div class="track">
      <div class="scroll"><i></i></div>
      <div class="bars" id="bars"></div>
      <div class="items" id="items"></div>
      <svg class="marker" width="18" height="49" viewBox="0 0 18 49"><path d="M0 0h18v6l-7 8v35H7.500V14L0 6z" fill="#646464"/></svg>
    </div>
    <svg class="settings" width="25" height="25"><use href="#gear"/></svg>
  </footer>
</div>
<script src="app.js"></script>
</body>
</html>
```
FILE: styles.css
```css
* { box-sizing: border-box; }
body { margin: 0; background: #fff; color: #333; font: 15px/1 "Liberation Sans", "Noto Sans CJK JP", sans-serif; overflow: hidden; }
svg { display: block; flex: none; }
i { font-style: normal; }
.defs { position: absolute; }
[data-w] { display: inline-block; white-space: nowrap; transform-origin: 0 50%; flex: none; font-feature-settings: "palt"; }
.window { width: 1919px; height: 1171px; display: grid; grid-template-rows: 46px 48px 127px 1fr 75px; border: 1px solid #1b315c; border-bottom: 0; border-left-color: #55565c; }

.titlebar { display: flex; align-items: center; padding-left: 13px; background: #fff; }
.title { margin: 1px 0 0 6px; color: #000; font: 18px/24px "Open Sans", "Noto Sans CJK JP", sans-serif; }
.logo { margin-top: -2px; }
.winctl { display: flex; gap: 54px; margin: 0 27px 0 auto; }
.winctl svg { fill: none; stroke: #000; stroke-width: 1; }
.winctl svg:nth-child(2) { margin-left: -1px; }

.tabbar { display: flex; align-items: flex-end; background: #cacaca; margin-right: 2px; }
.qat { display: flex; align-items: center; width: 289px; height: 48px; padding-left: 13px; fill: #666; color: #666; }
.m9 { margin-left: 9px; } .m19 { margin-left: 19px; } .m28 { margin-left: 28px; } .m29 { margin-left: 29px; }
.m9 { margin-top: -2px; }
.dim { fill: #969696; color: #969696; }
.back { fill: none; stroke: currentColor; stroke-width: 3.2px; }
.tab { display: flex; align-items: center; height: 42px; border-radius: 5px 5px 0 0; font: 17px/24px "Open Sans", "Noto Sans CJK JP", sans-serif; }
.idle { width: 635px; background: #bababa; padding-left: 236px; color: #666; }
.idle .cube { opacity: .5; }
.active { width: 634px; margin-left: 6px; background: #f1f1f1; padding-left: 224px; color: #444; }
.tab span { margin: 2px 0 0 5px; }
.active span { margin-left: 7px; }
.tab .close { margin: 0 9px 0 auto; }
.plus { width: 43px; margin-left: 6px; background: #bababa; justify-content: center; }
.status { display: flex; align-items: center; height: 48px; margin-left: 17px; }
.s-clock { margin-left: 26px; }
.count { margin-left: 4px; width: 10px; font: 16px "Open Sans", sans-serif; color: #666; }
.s-bell { margin-left: 37px; } .s-help { margin-left: 28px; } .s-user { margin-left: 30px; }

.ribbon { display: flex; background: #f1f1f1; border-bottom: 4px solid #f5f5f5; box-shadow: inset 0 -2px #dfdfdf; }
.workspace { display: flex; align-items: center; justify-content: center; gap: 8px; width: 166px; height: 93px; margin: 15px 0 0 17px; padding-bottom: 3px; border: 2px solid #e0e0e0; border-radius: 6px; }
.workspace b { font-weight: 500; }
.tools { flex: 1; margin-left: -1px; }
.rtabs { display: grid; grid-template-columns: 110px 131.500px 109.500px 147.500px 140px 90px; height: 36px; padding: 0 0 5px 41.500px; align-items: center; }
.rtabs .on { position: relative; color: #0696d7; }
.on::after { content: ""; position: absolute; left: -16px; top: 24px; width: 78px; height: 5px; background: #0696d7; }
.groups { display: flex; }
.groups section { height: 83px; }
.groups section + section { border-left: 2px solid; border-image: linear-gradient(transparent 4px, #dedede 4px 80px, transparent 80px) 1; }
.icons { display: flex; align-items: center; height: 57px; gap: 15.300px; }
.icons svg { width: 49px; height: 49px; }
.icons .rev { margin-top: 4px; }
.icons .big { width: 57px; height: 57px; }
.label { display: flex; align-items: center; gap: 6px; height: 29px; color: #333; }
.g1 { width: 408px; } .g1 .icons { padding-left: 23px; } .g1 .label { padding-left: 180px; }
.g2 { width: 404px; } .g2 .icons { padding-left: 17.500px; } .g2 .label { padding-left: 174px; }
.g3 { width: 145px; } .g3 .icons { padding-left: 16px; } .g3 .label { padding-left: 32px; }
.g4 { width: 88px; } .g4 .icons { padding-left: 20px; } .g4 .label { padding-left: 20px; }
.g5 { width: 89px; } .g5 .icons { padding-left: 19px; } .g5 .label { padding-left: 20px; }
.g6 { width: 145px; } .g6 .icons { padding-left: 18px; } .g6 .label { padding-left: 45px; }
.g7 { width: 120px; } .g7 .icons { padding-left: 16px; } .g7 .label { padding-left: 20px; }

.viewport { display: grid; background: #fff; min-height: 0; }
.scene, .overlay { grid-area: 1 / 1; }
.scene { margin-left: -1px; }
.viewcube text { font-family: "Noto Sans CJK JP", sans-serif; fill: #858a91; }
.viewcube .az { font: bold 17px "Liberation Sans", sans-serif; fill: #8f8ff5; }
.viewcube .ax { font: bold 16px "Liberation Sans", sans-serif; fill: #f79a9a; }
.overlay { position: relative; z-index: 1; display: flex; flex-direction: column; padding: 6px 0 6px 6px; }
.panelhead { display: flex; align-items: center; width: 450px; height: 38px; background: #f1f1f1; border: 2px solid #c9c9c9; border-width: 1.500px; color: #555; }
.browserhead svg:first-child { margin-left: 7px; }
.browserhead span { margin: -3px 0 0 13px; }
.knob { margin-left: auto; }
.grip { width: 4px; height: 17px; margin: 0 2px 0 11px; border: solid #8a8a8a; border-width: 0 1px 0 2px; }
.tree { display: grid; grid-auto-rows: 30px; row-gap: 6px; margin-top: 7px; font-size: 16px; }
.row, .cell { display: flex; align-items: center; }
.cell { height: 30px; background: #f1f1f1; }
.eye { color: #999; } .faint { color: #d4d4d4; }
.root { padding-left: 25px; }
.root .cell { width: 309px; margin-left: 11px; padding-left: 3px; }
.root .bar { width: 5px; height: 24px; background: #ef5b50; }
.root .eye { margin: 0 9px 0 4px; }
.sel { display: flex; align-items: center; width: 195px; height: 24px; background: #989898; color: #fff; padding-left: 4px; }
.sel b { margin-left: 18px; }
.badge { margin: 0 11px 0 4px; font-weight: bold; }
.l1 .tg { width: 17px; margin-left: 52px; }
.l1 .cell { margin-left: 12px; padding-left: 4px; }
.f2 { margin-left: 13px; } .f2b { margin-left: 14px; }
.n22 { margin-left: 22px; } .n19 { margin-left: 19px; }
.w183 { width: 183px; } .w135 { width: 135px; } .w136 { width: 136px; } .w149 { width: 149px; } .w112 { width: 112px; } .w124 { width: 124px; }
.l2 .cell { margin-left: 108px; padding-left: 5px; }
.l2 .k { margin: 0 20px 0 13px; }
.l2 span { margin-top: 2px; }
.part .tg { margin-left: 53px; }
.part .cell { width: 186px; margin-left: 13px; border-left: 8px solid var(--c); padding-left: 4px; }
.part .c { margin: 0 8px 0 13px; }
.part .cell span { flex: 1; height: 30px; line-height: 32px; padding-left: 13px; white-space: nowrap; }
.part .picked { background: #7f7f7f; color: #f4f4f4; }
.part .short { width: 174px; }
.c-pink { --c: #f28792; } .c-peach { --c: #ffb59b; } .c-yellow { --c: #fff065; } .c-blue { --c: #7ad6fb; } .c-green { --c: #62fb60; } .c-orange { --c: #ffbf55; } .c-red { --c: #e85c50; }
.bottom { display: flex; margin-top: auto; }
.comments { padding-left: 35px; }
.comments span { margin-top: -2px; }
.navbar { display: flex; align-items: center; width: 356px; height: 36px; margin: 1px 0 0 324px; padding-left: 4px; background: #f1f1f1; }
.dn, .n7 { margin-left: 7px; } .n3 { margin-left: 9px; } .n4 { margin-left: 14px; } .n5 { margin-left: 13px; } .n6 { margin-left: 13px; } .n8 { margin-left: 8px; } .n9 { margin-left: 3px; } .n10 { margin-left: 9.500px; }

.timeline { display: flex; background: #f1f1f1; border-top: 2px solid #d2d2d2; }
.player { display: flex; align-items: center; justify-content: space-between; width: 168px; height: 84px; margin-left: 16px; fill: #4c4c4c; }
.track { position: relative; width: 1650px; margin-left: 21px; }
.scroll { height: 10px; margin-top: -2px; padding-left: 241px; }
.scroll i { display: block; width: 1462px; height: 12px; background: #cacaca; border-radius: 5px; }
.bars { display: flex; gap: 6px; height: 9px; margin: 3px 0 3px 11px; }
.bars i { flex: none; height: 9px; background: var(--c); }
.items { display: flex; gap: 6px; width: 1616px; height: 39px; padding-left: 11px; background: linear-gradient(#cacaca, #cacaca) 17px 36px / 1596px 3px no-repeat, repeating-linear-gradient(90deg, #cacaca 0 5px, transparent 5px 8px) 0 36px / 16px 3px no-repeat; }
.items span { flex: none; width: 30px; height: 37px; padding: 0 3px; background: linear-gradient(#cacaca, #cacaca) 14px 28px / 3px 9px no-repeat; }
.items svg { width: 24px; height: 24px; }
.marker { position: absolute; left: 1619px; top: 13px; }
.settings { margin: 29px 0 0 18px; }
```
FILE: app.js
```js
document.querySelectorAll('[data-w]').forEach(function (el) {
  var want = +el.dataset.w;
  var natural = el.offsetWidth;
  el.style.transform = 'scaleX(' + want / natural + ')';
  el.style.marginRight = (want - natural) + 'px';
});

// Feature history: one entry per owner component, with its operations.
var history3d = [
  ['red', 'hole copy sketch'], ['pink', 'hole'], ['red', 'plane sketch comp'],
  ['peach', 'ext'], ['red', 'sketch'], ['peach', 'hole'], ['red', 'sketch'], ['peach', 'hole'],
  ['red', 'plane sketch comp'], ['yellow', 'ext'], ['red', 'sketch'], ['yellow', 'hole mirror'],
  ['red', 'plane sketch comp'], ['blue', 'ext'], ['red', 'sketch'], ['blue', 'hole'], ['red', 'sketch'], ['blue', 'hole'],
  ['red', 'plane sketch comp'], ['green', 'ext'], ['red', 'sketch'], ['green', 'hole'], ['red', 'sketch'], ['green', 'hole mirror'],
  ['red', 'plane sketch comp'], ['orange', 'ext'], ['red', 'sketch'], ['orange', 'hole fillet'], ['red', 'plane pin']
];
var bars = '', items = '';
history3d.forEach(function (h) {
  var ops = h[1].split(' ');
  bars += '<i class="c-' + h[0] + '" style="width:' + (ops.length * 36 - 6) + 'px"></i>';
  ops.forEach(function (op) { items += '<span><svg><use href="#t-' + op + '"/></svg></span>'; });
});
document.getElementById('bars').innerHTML = bars;
document.getElementById('items').innerHTML = items;
```
